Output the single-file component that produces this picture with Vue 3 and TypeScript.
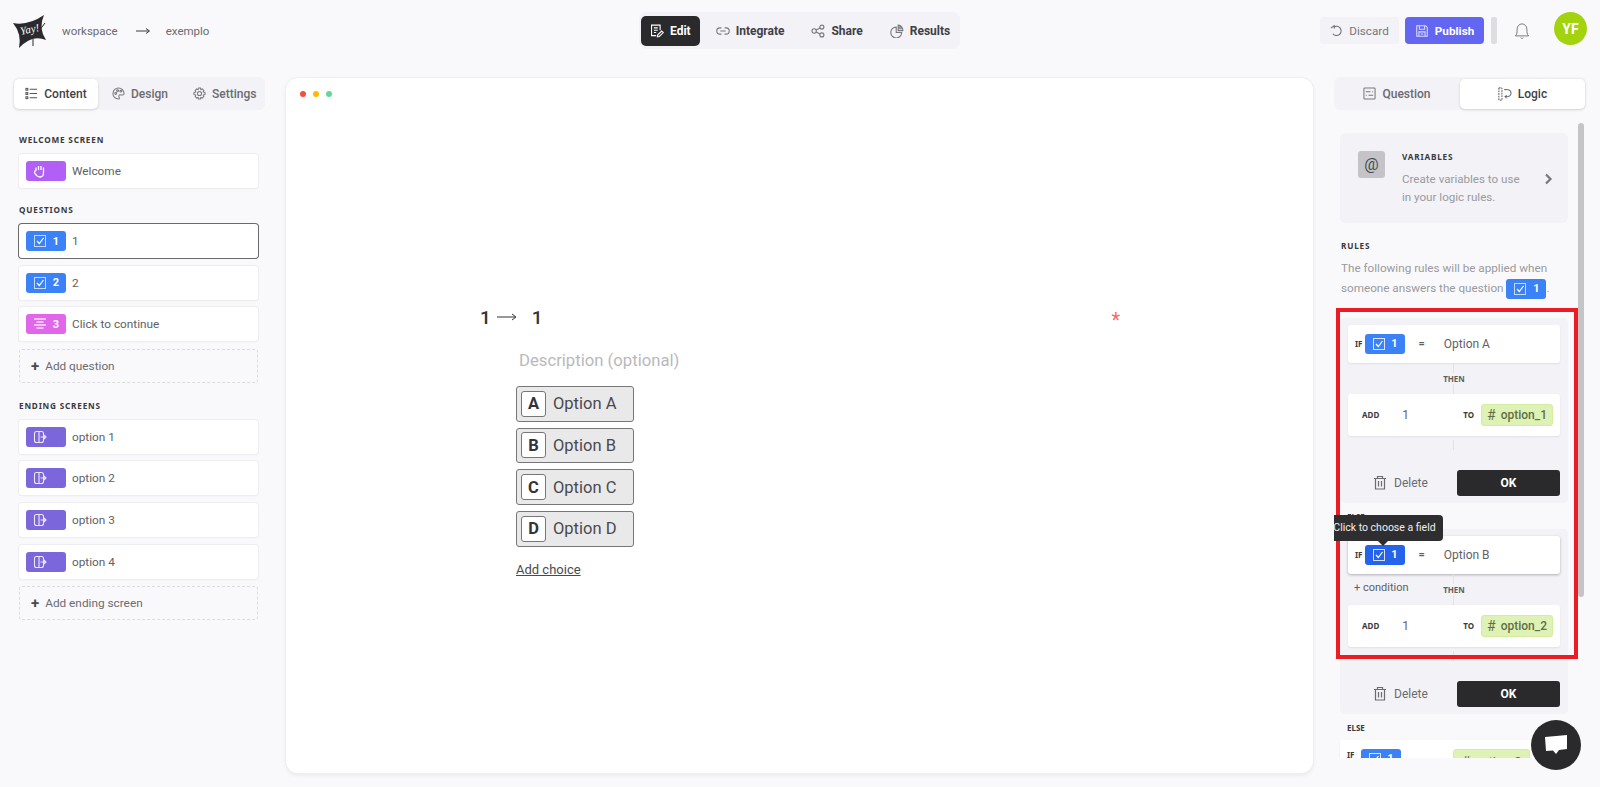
<script setup lang="ts">
const questions = [
	{ num: "1", label: "1", kind: "blue", active: true },
	{ num: "2", label: "2", kind: "blue", active: false },
	{ num: "3", label: "Click to continue", kind: "pink", active: false }
]
const endings = ["option 1", "option 2", "option 3", "option 4"]
const choices = ["A", "B", "C", "D"]
const rules = [
	{ option: "Option A", variable: "option_1", hover: false },
	{ option: "Option B", variable: "option_2", hover: true }
]
</script>

<template>
	<div class="page">
		<header class="top">
			<div class="crumbs">
				<div class="logo">
					<svg width="34" height="34" viewBox="0 0 34 34">
						<path d="M1 9 Q16 12 32 1 Q26 14 34 26 Q20 20 7 34 Q10 20 1 9 Z" fill="#2a2a2c"/>
						<path d="M27 17 L33 9 M21 20 L21 32" stroke="#2a2a2c" stroke-width="1"/>
					</svg>
					<span class="logo_text">Yay!</span>
				</div>
				<span class="crumb">workspace</span>
				<svg width="16" height="8" viewBox="0 0 16 8" class="crumb_arrow"><path d="M1 4 H14 M11 1.500 L14.500 4 L11 6.500" fill="none" stroke="#3a3a3c" stroke-width="1"/></svg>
				<span class="crumb">exemplo</span>
			</div>

			<nav class="center_tabs">
				<div class="ctab on">
					<svg width="14" height="14" viewBox="0 0 18 18" fill="none" stroke="currentColor" stroke-width="1.400"><path d="M13 8 V1.500 H2 V15 H8 M5 5 H10 M5 8 H10 M5 11 H8"/><path d="M9.500 16.500 L10 14 L15 9 L17 11 L12 16 Z"/></svg>
					Edit
				</div>
				<div class="ctab">
					<svg width="14" height="14" viewBox="0 0 18 18" fill="none" stroke="#77777c" stroke-width="1.400"><path d="M7 5 H5 A4 4 0 0 0 5 13 H7 M11 5 H13 A4 4 0 0 1 13 13 H11 M5.500 9 H12.500"/></svg>
					Integrate
				</div>
				<div class="ctab">
					<svg width="14" height="14" viewBox="0 0 18 18" fill="none" stroke="#77777c" stroke-width="1.400"><circle cx="4" cy="9" r="2.800"/><circle cx="14" cy="4" r="2.600"/><circle cx="14" cy="14" r="2.600"/><path d="M6.500 7.800 L11.600 5.200 M6.500 10.200 L11.600 12.800"/></svg>
					Share
				</div>
				<div class="ctab">
					<svg width="14" height="14" viewBox="0 0 18 18" fill="none" stroke="#77777c" stroke-width="1.400"><path d="M8 4 A7 7 0 1 0 15 11 H8 Z"/><path d="M10.500 1.500 A6.500 6.500 0 0 1 16.500 8.500 H10.500 Z M10.500 4 H15 M10.500 6.200 H16"/></svg>
					Results
				</div>
			</nav>

			<div class="actions">
				<button class="discard">
					<svg width="13" height="13" viewBox="0 0 14 14" fill="none" stroke="#6b6b70" stroke-width="1.100"><path d="M4 3.500 A5 5 0 1 1 3 10.500"/><path d="M1 4.500 L4.500 1.800 L4.800 5"/></svg>
					Discard
				</button>
				<button class="publish">
					<svg width="14" height="14" viewBox="0 0 16 16" fill="none" stroke="#dcdcfb" stroke-width="1.200"><path d="M2 2 H12 L14 4 V14 H2 Z M5 2 V6 H11 V2 M4.500 14 V9 H11.500 V14 M6.500 11.500 H9.500"/></svg>
					Publish
				</button>
				<span class="sep"></span>
				<svg class="bell" width="16" height="18" viewBox="0 0 18 20" fill="none" stroke="#77777c" stroke-width="1.100"><path d="M1.500 15.500 C3.500 14 3.500 11 3.500 8 C3.500 4.500 6 2 9 2 C12 2 14.500 4.500 14.500 8 C14.500 11 14.500 14 16.500 15.500 Z"/><path d="M7.500 17.500 A1.800 1.800 0 0 0 10.500 17.500"/></svg>
				<div class="avatar">YF</div>
			</div>
		</header>

		<main class="main">
			<aside class="left">
				<div class="tabs left_tabs">
					<div class="tab on content_tab">
						<svg width="13" height="13" viewBox="0 0 14 14" fill="none" stroke="#55555a" stroke-width="1.100"><path d="M5 2.500 H13 M5 7 H13 M5 11.500 H13"/><rect x="1" y="1.500" width="2" height="2"/><rect x="1" y="6" width="2" height="2"/><rect x="1" y="10.500" width="2" height="2"/></svg>
						Content
					</div>
					<div class="tab">
						<svg width="13" height="13" viewBox="0 0 14 14" fill="none" stroke="#77777c" stroke-width="1.100"><path d="M7 1 A6 6 0 1 0 7 13 C8.500 13 8 11.500 7.500 10.500 C7 9 8 8 9.500 8.500 C11 9 13 8.500 13 7 A6 6 0 0 0 7 1 Z"/><circle cx="4" cy="7" r="1"/><circle cx="6" cy="4" r="1"/><circle cx="9.500" cy="4.500" r="1"/></svg>
						Design
					</div>
					<div class="tab">
						<svg width="13" height="13" viewBox="0 0 14 14" fill="none" stroke="#77777c" stroke-width="1.100"><circle cx="7" cy="7" r="2.200"/><path d="M6 1 H8 L8.400 2.800 L10 2.100 L11.700 3.800 L11 5.400 L13 6 V8 L11 8.600 L11.700 10.200 L10 11.900 L8.400 11.200 L8 13 H6 L5.600 11.200 L4 11.900 L2.300 10.200 L3 8.600 L1 8 V6 L3 5.400 L2.300 3.800 L4 2.100 L5.600 2.800 Z"/></svg>
						Settings
					</div>
				</div>

				<div class="list">
					<h4 class="heading first">WELCOME SCREEN</h4>
					<div class="item">
						<span class="badge purple">
							<svg width="14" height="14" viewBox="0 0 14 14" fill="none" stroke="#fff" stroke-width="1.300"><path d="M3 7 V3.500 M5.500 6 V2 M8 6 V2 M10.500 7 V3.500 M3 7 C1.500 6.500 1 8 2 9.500 C3.500 12 5 13 7 13 C9.500 13 10.500 11 10.500 8.500 V7"/></svg>
						</span>
						Welcome
					</div>

					<h4 class="heading">QUESTIONS</h4>
					<div v-for="q in questions" :key="q.num" class="item" :class="{ active: q.active }">
						<span class="badge" :class="q.kind">
							<svg v-if="q.kind == 'blue'" width="14" height="14" viewBox="0 0 14 14" fill="none" stroke="#fff" stroke-width="1"><rect x="1.500" y="1.500" width="11" height="11" opacity=".7"/><path d="M4 7 L6.300 9.500 L10.500 4" stroke-width="1.200"/></svg>
							<svg v-else width="14" height="14" viewBox="0 0 14 14" fill="none" stroke="#fff" stroke-width="1.300" opacity=".8"><path d="M1 2 H13 M3.500 5 H10.500 M1 8 H13 M3.500 11 H10.500"/></svg>
							<b>{{ q.num }}</b>
						</span>
						{{ q.label }}
					</div>
					<div class="add_item"><span class="plus">+</span> Add question</div>

					<h4 class="heading">ENDING SCREENS</h4>
					<div v-for="e in endings" :key="e" class="item">
						<span class="badge violet">
							<svg width="14" height="14" viewBox="0 0 14 14" fill="none" stroke="#fff" stroke-width="1.100" opacity=".85"><rect x="1.500" y="1.500" width="9" height="11" rx="2"/><path d="M6 1.500 V12.500 M7.500 7 H13 M11 5 L13 7 L11 9"/></svg>
						</span>
						{{ e }}
					</div>
					<div class="add_item"><span class="plus">+</span> Add ending screen</div>
				</div>
			</aside>

			<section class="canvas">
				<div class="dots"><i class="red"></i><i class="yellow"></i><i class="green"></i></div>
				<div class="question">
					<div class="title_row">
						<span class="q_num">1</span>
						<svg width="20" height="10" viewBox="0 0 20 10"><path d="M0 5 H18 M15 2 L19 5 L15 8" fill="none" stroke="#333" stroke-width="1"/></svg>
						<span class="q_title">1</span>
						<span class="star">*</span>
					</div>
					<p class="desc">Description (optional)</p>
					<div class="choices">
						<div v-for="c in choices" :key="c" class="choice">
							<span class="key">{{ c }}</span>
							Option {{ c }}
						</div>
					</div>
					<a class="add_choice">Add choice</a>
				</div>
			</section>

			<aside class="right">
				<div class="tabs right_tabs">
					<div class="tab">
						<svg width="13" height="13" viewBox="0 0 14 14" fill="none" stroke="#77777c" stroke-width="1.100"><rect x="1" y="1" width="12" height="12" rx="1"/><path d="M3 5 H8 M10 5 H11 M3 9 H4 M6 9 H11"/></svg>
						Question
					</div>
					<div class="tab on">
						<svg width="14" height="14" viewBox="0 0 16 16" fill="none" stroke="#55555a" stroke-width="1.100"><rect x="1" y="1" width="3.500" height="14" stroke-dasharray="2 1"/><path d="M7 3 H11 A4 4 0 0 1 11 11 H8 M10 9 L8 11 L10 13"/></svg>
						Logic
					</div>
				</div>

				<div class="scroll_wrap">
					<div class="scroll_body">
						<div class="variables">
							<span class="at">@</span>
							<div class="var_text">
								<h4 class="heading var_head">VARIABLES</h4>
								<p>Create variables to use in your logic rules.</p>
							</div>
							<svg class="chev" width="9" height="12" viewBox="0 0 9 12" fill="none" stroke="#77777c" stroke-width="2.200"><path d="M2 1.500 L6.500 6 L2 10.500"/></svg>
						</div>

						<h4 class="heading rules_head">RULES</h4>
						<p class="rules_text">
							The following rules will be applied when someone answers the question
							<span class="badge blue inline">
								<svg width="14" height="14" viewBox="0 0 14 14" fill="none" stroke="#fff" stroke-width="1"><rect x="1.500" y="1.500" width="11" height="11" opacity=".7"/><path d="M4 7 L6.300 9.500 L10.500 4" stroke-width="1.200"/></svg>
								<b>1</b>
							</span>.
						</p>

						<div class="rules">
							<div class="red_box"></div>
							<template v-for="r in rules" :key="r.option">
								<div class="rule">
									<div class="row if_row" :class="{ raised: r.hover }">
										<span class="kw">IF</span>
										<span class="badge blue" :class="{ deep: r.hover }">
											<svg width="14" height="14" viewBox="0 0 14 14" fill="none" stroke="#fff" stroke-width="1"><rect x="1.500" y="1.500" width="11" height="11" opacity=".8"/><path d="M4 7 L6.300 9.500 L10.500 4" stroke-width="1.200"/></svg>
											<b>1</b>
										</span>
										<span class="eq">=</span>
										<span class="val">{{ r.option }}</span>
										<div v-if="r.hover" class="tooltip">Click to choose a field</div>
									</div>
									<div class="then_row">
										<span v-if="r.hover" class="cond">+ condition</span>
										<span class="then">THEN</span>
									</div>
									<div class="row add_row">
										<span class="kw add_kw">ADD</span>
										<span class="amount">1</span>
										<span class="kw to">TO</span>
										<span class="var_chip"><em>#</em> {{ r.variable }}</span>
									</div>
									<div class="stub"></div>
									<div class="rule_foot">
										<span class="del">
											<svg width="14" height="15" viewBox="0 0 14 15" fill="none" stroke="#6b6b70" stroke-width="1.200"><path d="M1 3.500 H13 M4.500 3.500 V1.500 H9.500 V3.500 M2.500 3.500 V14 H11.500 V3.500 M5.500 6 V11.500 M8.500 6 V11.500"/></svg>
											Delete
										</span>
										<button class="ok">OK</button>
									</div>
								</div>
								<h4 class="heading else">ELSE</h4>
							</template>
							<div class="row if_row last_row">
								<span class="kw">IF</span>
								<span class="badge blue">
									<svg width="14" height="14" viewBox="0 0 14 14" fill="none" stroke="#fff" stroke-width="1"><rect x="1.500" y="1.500" width="11" height="11" opacity=".8"/><path d="M4 7 L6.300 9.500 L10.500 4" stroke-width="1.200"/></svg>
									<b>1</b>
								</span>
								<span class="var_chip last_chip"><em>#</em> option_3</span>
							</div>
						</div>
					</div>
					<div class="scrollbar"></div>
				</div>
			</aside>
		</main>

		<div class="chat">
			<svg width="26" height="24" viewBox="0 0 26 24"><path d="M2 4 L24 2 V16 L16 17 L13 21 L10 17.500 L3 18 Z" fill="#fff"/></svg>
		</div>
	</div>
</template>

<style>
html, body {
	margin: 0;
	background: #f9f9fb;
}
</style>

<style scoped>
.page {
	position: relative;
	width: 1600px;
	height: 787px;
	overflow: hidden;
	background: #f9f9fb;
	font-family: Roboto, "Noto Sans", sans-serif;
	color: #5f5f64;
}

.top {
	display: grid;
	grid-template-columns: 1fr auto 1fr;
	align-items: center;
	height: 77px;
	padding: 0 13px 16px 12px;
	box-sizing: border-box;
}

.crumbs {
	display: flex;
	align-items: center;
	font-size: 11.500px;
	color: #6b6b70;
}

.logo {
	position: relative;
	width: 34px;
	height: 34px;
	margin-right: 16px;
}

.logo_text {
	position: absolute;
	left: 8px;
	top: 9px;
	font-family: "Liberation Serif", serif;
	font-style: italic;
	font-size: 11px;
	color: #fff;
	transform: rotate(-12deg);
}

.crumb_arrow {
	margin: 0 15px 0 17px;
}

.center_tabs {
	display: flex;
	align-items: center;
	gap: 27px;
	width: 321px;
	height: 37px;
	box-sizing: border-box;
	padding: 0 2px;
	border-radius: 8px;
	background: #f2f2f7;
}

.ctab {
	display: flex;
	align-items: center;
	gap: 6px;
	height: 30px;
	font-size: 12px;
	font-weight: 700;
	color: #3f3f44;
}

.ctab.on {
	margin-right: -11px;
	padding: 0 9px;
	border-radius: 5px;
	background: #2a2a2c;
	color: #fff;
}

.actions {
	display: flex;
	align-items: center;
	justify-content: flex-end;
}

.actions button {
	display: flex;
	align-items: center;
	justify-content: center;
	gap: 6px;
	width: 79px;
	height: 27px;
	border: 0;
	border-radius: 4px;
	font-family: inherit;
	font-size: 11.700px;
}

.discard {
	margin-right: 6px;
	background: #f2f2f7;
	color: #77777c;
}

.publish {
	background: #6366f1;
	color: #fff;
	font-weight: 700;
}

.sep {
	width: 6px;
	height: 27px;
	margin: 0 17px 0 7px;
	border-radius: 2px;
	background: #dedee2;
}

.bell {
	margin-right: 24px;
}

.avatar {
	display: flex;
	align-items: center;
	justify-content: center;
	width: 33px;
	height: 33px;
	margin-top: -4px;
	border-radius: 50%;
	background: #a3d30f;
	color: #fff;
	font-size: 14px;
	font-weight: 700;
}

.main {
	display: grid;
	grid-template-columns: 252px 1027px 252px;
	gap: 21px;
	height: 696px;
	padding-left: 13px;
}

.tabs {
	display: flex;
	align-items: center;
	justify-content: space-between;
	height: 33px;
	padding: 0 1px;
	border-radius: 6px;
	background: #f2f2f7;
}

.left_tabs {
	justify-content: flex-start;
	gap: 25px;
}

.tab {
	display: flex;
	align-items: center;
	justify-content: center;
	gap: 6px;
	height: 30px;
	font-size: 12px;
	font-weight: 500;
	color: #6b6b70;
}

.tab.on {
	border-radius: 5px;
	background: #fff;
	box-shadow: 0 1px 3px rgba(0, 0, 0, 0.14);
	color: #3f3f44;
}

.content_tab {
	width: 84px;
	margin-right: -11px;
}

.list {
	display: flex;
	flex-direction: column;
	gap: 7.700px;
	padding: 0 7px 0 6px;
}

.heading {
	margin: 9px 0 0;
	font-family: "Noto Sans", sans-serif;
	font-size: 8.200px;
	line-height: 12px;
	letter-spacing: 0.8px;
	font-weight: 700;
	color: #3a3a3c;
}

.heading.first {
	margin-top: 24px;
}

.item {
	display: flex;
	align-items: center;
	gap: 6px;
	height: 34px;
	padding-left: 7px;
	box-sizing: border-box;
	border-radius: 3px;
	background: #fff;
	box-shadow: 0 0 0 1px #eeeef1, 0 1px 2px rgba(0, 0, 0, 0.05);
	font-size: 11.800px;
}

.item.active {
	box-shadow: 0 0 0 1px #6a6a6e;
}

.badge {
	display: inline-flex;
	align-items: center;
	justify-content: space-between;
	box-sizing: border-box;
	width: 40px;
	height: 20px;
	padding: 0 7px;
	border-radius: 3px;
	color: #fff;
	font-size: 11px;
}

.badge b {
	font-weight: 700;
}

.blue {
	background: #3b82f6;
}

.blue.deep {
	background: #2563eb;
}

.pink {
	background: #e066ea;
}

.purple {
	background: #b25ff5;
}

.violet {
	background: #7c66dc;
}

.add_item {
	display: flex;
	align-items: center;
	gap: 6px;
	height: 34px;
	padding-left: 11px;
	box-sizing: border-box;
	border: 1px dashed #dcdce0;
	border-radius: 3px;
	font-size: 11.800px;
	color: #6b6b70;
}

.plus {
	font-size: 15px;
	font-weight: 700;
	line-height: 1;
	color: #4a4a4e;
}

.canvas {
	height: 695px;
	margin-top: 1px;
	box-sizing: border-box;
	border-radius: 12px;
	background: #fff;
	box-shadow: 0 0 0 1px #efeff2, 0 2px 5px rgba(0, 0, 0, 0.08);
}

.dots {
	display: flex;
	gap: 7px;
	padding: 13px 0 0 14px;
}

.dots i {
	width: 6px;
	height: 6px;
	border-radius: 50%;
}

.dots .red {
	background: #f54e3f;
}

.dots .yellow {
	background: #fdbb05;
}

.dots .green {
	background: #64d698;
}

.question {
	width: 640px;
	margin: 206px 0 0 194px;
}

.title_row {
	display: flex;
	align-items: center;
	height: 28px;
	font-size: 19px;
	font-weight: 500;
	color: #333338;
}

.title_row svg {
	margin: 0 14px 0 6px;
}

.q_title {
	flex: 1;
	margin-left: 1px;
}

.star {
	margin-top: 5px;
	font-size: 20px;
	font-weight: 400;
	color: #f56b5f;
}

.desc {
	margin: 18px 0 13px 39px;
	font-size: 16.700px;
	line-height: 24px;
	color: #b9b9bc;
}

.choices {
	display: flex;
	flex-direction: column;
	gap: 6.200px;
	margin-left: 36px;
}

.choice {
	display: flex;
	align-items: center;
	gap: 7px;
	width: 118px;
	height: 35.500px;
	box-sizing: border-box;
	padding-left: 4px;
	border: 1px solid #77777a;
	border-radius: 3px;
	background: #e9e9e9;
	font-size: 16.500px;
	color: #4a4a4e;
}

.key {
	display: flex;
	align-items: center;
	justify-content: center;
	width: 25px;
	height: 26px;
	box-sizing: border-box;
	border: 1px solid #77777a;
	border-radius: 3px;
	background: #fff;
	font-weight: 700;
	color: #333338;
}

.add_choice {
	display: block;
	margin: 15px 0 0 36px;
	font-size: 13px;
	color: #4a4a4e;
	text-decoration: underline;
}

.right_tabs {
	padding: 0 1px 0 0;
}

.right_tabs .tab {
	flex: 1;
}

.right_tabs .tab.on {
	flex: 0 0 125px;
}

.scroll_wrap {
	position: relative;
	height: 648px;
	margin-top: 0;
	overflow: hidden;
}

.scroll_body {
	padding: 23px 18px 0 6px;
}

.scrollbar {
	position: absolute;
	top: 13px;
	right: 2px;
	width: 6px;
	height: 474px;
	border-radius: 3px;
	background: #c5c5c8;
}

.variables {
	display: flex;
	align-items: flex-start;
	gap: 17px;
	height: 90px;
	box-sizing: border-box;
	padding: 18px 12px 0 18px;
	border-radius: 6px;
	background: #f2f2f7;
}

.at {
	display: flex;
	align-items: center;
	justify-content: center;
	flex-shrink: 0;
	width: 27px;
	height: 27px;
	border-radius: 3px;
	background: #c4c4c8;
	font-size: 16px;
	color: #4a4a4e;
}

.var_text {
	width: 128px;
}

.var_head {
	margin: 0 0 7px;
}

.var_text p {
	margin: 0;
	font-size: 11.600px;
	line-height: 18px;
	color: #9a9a9f;
}

.chev {
	margin-top: 22px;
	margin-left: -3px;
}

.rules_head {
	margin: 17px 0 6px;
	padding-left: 1px;
}

.rules_text {
	margin: 0;
	font-size: 11.700px;
	line-height: 20px;
	color: #9a9a9f;
	padding-left: 1px;
}

.rules_text .inline {
	vertical-align: middle;
}

.rules {
	position: relative;
	margin-top: 19px;
}

.red_box {
	position: absolute;
	top: -10px;
	left: -4px;
	width: 242px;
	height: 351px;
	box-sizing: border-box;
	border: 4px solid #ed1c24;
	z-index: 3;
}

.rule {
	height: 185px;
	box-sizing: border-box;
	padding: 7px 8px 0;
	border-radius: 5px;
	background: #f2f2f7;
}

.row {
	position: relative;
	display: flex;
	align-items: center;
	border-radius: 3px;
	background: #fff;
	box-shadow: 0 1px 2px rgba(0, 0, 0, 0.08);
	font-size: 12px;
}

.if_row {
	height: 38px;
	padding-left: 7px;
}

.if_row.raised {
	box-shadow: 0 1px 3px rgba(0, 0, 0, 0.28);
}

.kw {
	font-family: "Noto Sans", sans-serif;
	font-size: 8px;
	font-weight: 700;
	color: #3a3a3c;
	margin-right: 2px;
}

.eq {
	margin: 0 19px 0 14px;
	font-weight: 700;
	font-size: 11px;
}

.then_row {
	position: relative;
	height: 31px;
	display: flex;
	align-items: center;
	justify-content: center;
}

.then_row::before {
	content: "";
	position: absolute;
	left: 105px;
	top: 0;
	bottom: 0;
	width: 1px;
	background: #e2e2e6;
}

.then {
	position: relative;
	padding: 0 2px;
	background: #f2f2f7;
	font-family: "Noto Sans", sans-serif;
	font-size: 8px;
	font-weight: 700;
	color: #5f5f64;
}

.cond {
	position: absolute;
	left: 6px;
	top: 7px;
	font-size: 11px;
	color: #5f5f64;
}

.add_row {
	height: 42px;
	padding: 0 7px 0 14px;
}

.add_kw {
	margin-right: 23px;
}

.amount {
	flex: 1;
	font-size: 12px;
}

.to {
	margin-right: 7px;
}

.var_chip {
	display: inline-flex;
	align-items: center;
	gap: 5px;
	height: 20px;
	padding: 0 5px;
	border: 1px solid #d4ec9f;
	border-radius: 3px;
	background: #def2b5;
	font-size: 12px;
	font-weight: 500;
	color: #5f6f45;
}

.var_chip em {
	font-style: normal;
	font-size: 14px;
	font-weight: 400;
}

.stub {
	width: 1px;
	height: 10px;
	margin: 4px 0 0 105px;
	background: #e2e2e6;
}

.rule_foot {
	display: flex;
	align-items: center;
	justify-content: space-between;
	margin-top: 20px;
	padding-left: 25px;
}

.del {
	display: flex;
	align-items: center;
	gap: 7px;
	font-size: 12px;
	color: #6b6b70;
}

.ok {
	width: 103px;
	height: 26px;
	border: 0;
	border-radius: 3px;
	background: #2a2a2c;
	color: #fff;
	font-family: inherit;
	font-size: 12px;
	font-weight: 700;
}

.else {
	margin: 8px 0 6px 7px;
	font-size: 8px;
	letter-spacing: 0;
}

.tooltip {
	position: absolute;
	left: -22px;
	top: -21px;
	width: 117px;
	height: 26px;
	border-radius: 4px;
	background: #2e2e30;
	color: #eee;
	font-size: 10.500px;
	line-height: 26px;
	text-align: center;
	white-space: nowrap;
	z-index: 4;
}

.tooltip::after {
	content: "";
	position: absolute;
	left: 52px;
	top: 26px;
	border: 5px solid transparent;
	border-top-color: #2e2e30;
	border-bottom: 0;
}

.last_row {
	align-items: flex-start;
	height: 40px;
	margin-top: 1px;
	padding: 9px 0 0 7px;
	gap: 4px;
	box-sizing: border-box;
}

.last_chip {
	margin-left: 48px;
	height: 24px;
	padding: 0 8px;
}

.chat {
	position: absolute;
	left: 1531px;
	top: 720px;
	display: flex;
	align-items: center;
	justify-content: center;
	width: 50px;
	height: 50px;
	border-radius: 50%;
	background: #2a2a2c;
}
</style>
